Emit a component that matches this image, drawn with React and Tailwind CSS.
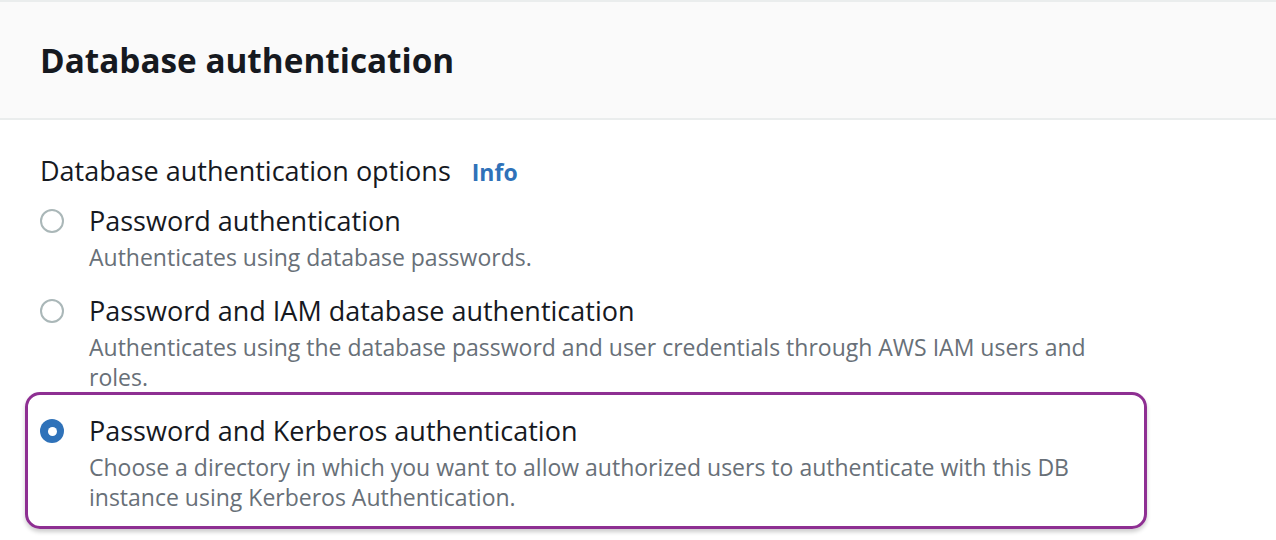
import React, { useState } from 'react';

const options = [
  {
    id: 'password',
    title: 'Password authentication',
    description: 'Authenticates using database passwords.'
  },
  {
    id: 'iam',
    title: 'Password and IAM database authentication',
    description:
      'Authenticates using the database password and user credentials through AWS IAM users and roles.'
  },
  {
    id: 'kerberos',
    title: 'Password and Kerberos authentication',
    description:
      'Choose a directory in which you want to allow authorized users to authenticate with this DB instance using Kerberos Authentication.'
  }
];

const Radio = ({ checked }) => (
  <span className="w-[24px] h-[24px] mt-[6px] flex-shrink-0 flex items-center justify-center">
    {checked ? (
      <span className="w-[24px] h-[24px] rounded-full bg-[#2f72b9] flex items-center justify-center">
        <span className="w-[9px] h-[9px] rounded-full bg-white" />
      </span>
    ) : (
      <span className="w-[24px] h-[24px] rounded-full border-2 border-[#aab7b8] bg-white" />
    )}
  </span>
);

const OptionRow = ({ option, checked, onSelect }) => (
  <label
    onClick={onSelect}
    className="flex items-start gap-[25px] cursor-pointer"
  >
    <Radio checked={checked} />
    <div className="w-[1040px]">
      <div className="text-[27px] leading-[36px] text-[#16191f]">{option.title}</div>
      <div className="mt-[3px] text-[23px] leading-[30px] text-[#687078]">
        {option.description}
      </div>
    </div>
  </label>
);

const App = () => {
  const [selected, setSelected] = useState('kerberos');

  return (
    <div className="w-[1276px] h-[540px] bg-white overflow-hidden font-['Open_Sans',sans-serif]">
      {/* Header */}
      <div className="h-[120px] bg-[#fafafa] border-t-2 border-b-2 border-[#eaeded] flex items-center px-[40px]">
        <h2 className="text-[33.3px] font-bold text-[#16191f] leading-none mt-[2px]">
          Database authentication
        </h2>
      </div>

      {/* Body */}
      <div className="pt-[33px] px-[40px]">
        <div className="flex items-baseline gap-[21px] h-[36px] leading-[36px]">
          <span className="text-[27px] text-[#16191f]">Database authentication options</span>
          <a className="text-[23px] font-bold text-[#2f72b9]">Info</a>
        </div>

        <div className="mt-[14px] flex flex-col">
          {options.map((option, i) => {
            const checked = selected === option.id;
            const row = (
              <OptionRow
                option={option}
                checked={checked}
                onSelect={() => setSelected(option.id)}
              />
            );
            if (checked) {
              return (
                <div
                  key={option.id}
                  className="-ml-[15px] w-[1122px] pl-[12px] pt-[18px] pb-[14px] border-[3px] border-[#8e2f92] rounded-[15px] shadow-[0_3px_4px_rgba(0,0,0,0.2)]"
                >
                  {row}
                </div>
              );
            }
            return (
              <div key={option.id} className={i > 0 ? 'mt-[21px]' : ''}>
                {row}
              </div>
            );
          })}
        </div>
      </div>
    </div>
  );
};

export default App;
